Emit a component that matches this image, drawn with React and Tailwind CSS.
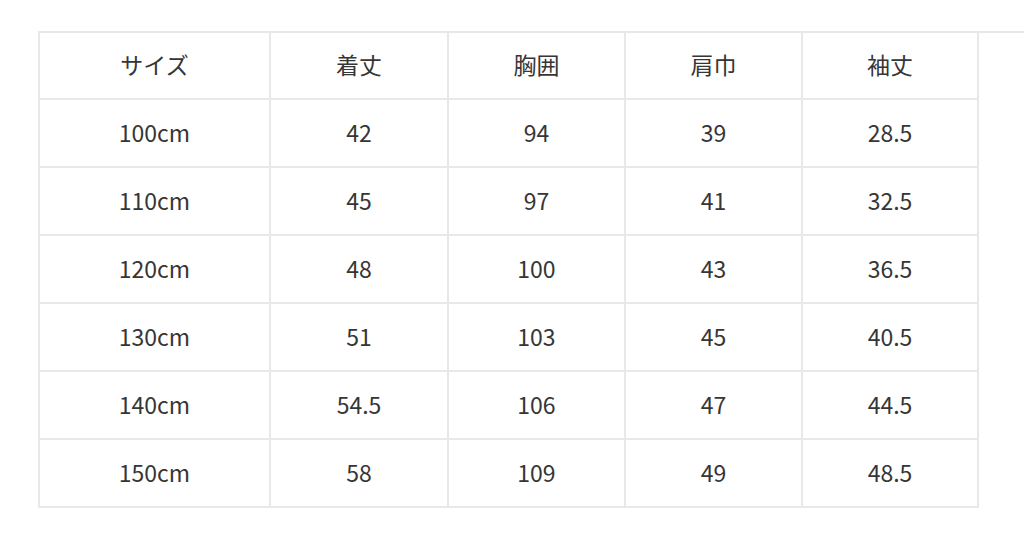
import React from "react";

const headers = ["サイズ", "着丈", "胸囲", "肩巾", "袖丈"];

const rows = [
  ["100cm", "42", "94", "39", "28.5"],
  ["110cm", "45", "97", "41", "32.5"],
  ["120cm", "48", "100", "43", "36.5"],
  ["130cm", "51", "103", "45", "40.5"],
  ["140cm", "54.5", "106", "47", "44.5"],
  ["150cm", "58", "109", "49", "48.5"],
];

// column widths incl. left border; last one also carries the right border
const widths = ["w-[231px]", "w-[178px]", "w-[177px]", "w-[177px]", "w-[178px]"];

const App = () => {
  return (
    <div
      className="w-[1024px] h-[542px] overflow-hidden bg-white pt-[31px] pl-[38px] text-[#363636]"
      style={{ fontFamily: '"Noto Sans CJK JP", "Noto Sans", sans-serif' }}
    >
      {/* Header */}
      <div className="flex h-[69px]">
        {headers.map((h, i) => (
          <div
            key={h}
            className={`${widths[i]} shrink-0 flex items-center justify-center pb-[3px] border-t-2 border-b-2 border-l-2 border-[#e8e8e8] text-[23px] ${
              i === headers.length - 1 ? "border-r-2" : ""
            }`}
          >
            {h}
          </div>
        ))}
        <div className="w-[120px] shrink-0 border-t-2 border-[#e8e8e8]"></div>
      </div>

      {/* Body */}
      {rows.map((row, r) => (
        <div key={r} className="flex h-[68px]">
          {row.map((val, i) => (
            <div
              key={i}
              className={`${widths[i]} shrink-0 flex items-center justify-center pb-[2px] border-b-2 border-l-2 border-[#e8e8e8] text-[23px] ${
                i === row.length - 1 ? "border-r-2" : ""
              }`}
            >
              {val}
            </div>
          ))}
        </div>
      ))}
    </div>
  );
};

export default App;
